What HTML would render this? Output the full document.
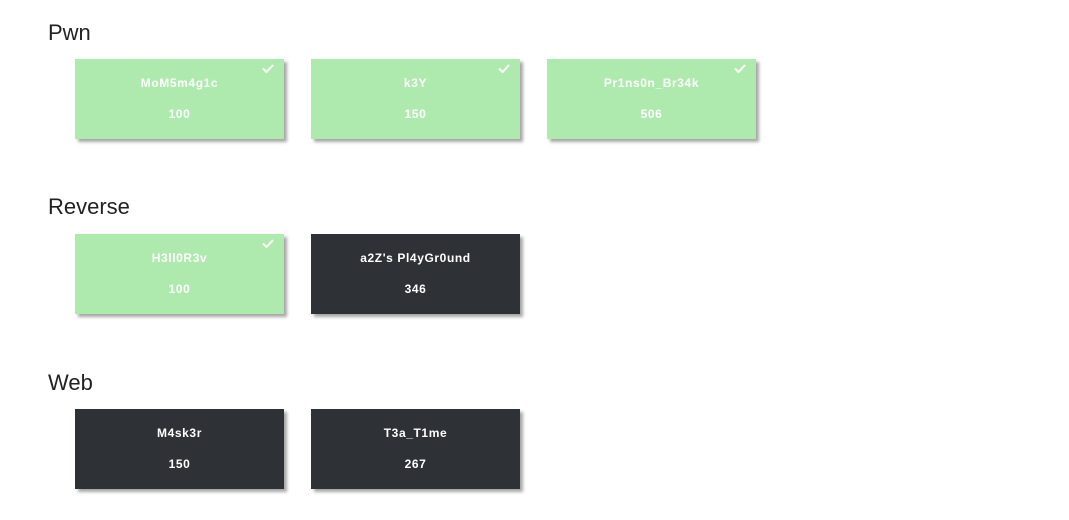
<!DOCTYPE html>
<html><head><style>
body{margin:0;background:#fff;font-family:"Liberation Sans",sans-serif;width:1069px;height:520px;overflow:hidden;position:relative}
h2{position:absolute;left:48px;margin:0;font-weight:normal;font-size:22px;color:#222;line-height:1}
.c{position:absolute;width:209px;height:80px;box-shadow:3px 3px 3px rgba(0,0,0,.35);color:#fff;font-weight:bold;font-size:12px;letter-spacing:.6px;text-align:center}
.g{background:#aeeaae}.d{background:#2e3236}
.t{position:absolute;top:17px;left:0;right:0}
.s{position:absolute;top:48px;left:0;right:0}
.k{position:absolute;right:10px;top:5px;width:12px;height:9px}
</style></head><body>
<h2 style="top:22px">Pwn</h2>
<div class="c g" style="left:75px;top:59px"><svg class="k" viewBox="0 0 12 9"><path d="M1 4.5L4.5 8L11 1" stroke="#fff" stroke-width="2" fill="none"/></svg><div class="t">MoM5m4g1c</div><div class="s">100</div></div>
<div class="c g" style="left:311px;top:59px"><svg class="k" viewBox="0 0 12 9"><path d="M1 4.5L4.5 8L11 1" stroke="#fff" stroke-width="2" fill="none"/></svg><div class="t">k3Y</div><div class="s">150</div></div>
<div class="c g" style="left:547px;top:59px"><svg class="k" viewBox="0 0 12 9"><path d="M1 4.5L4.5 8L11 1" stroke="#fff" stroke-width="2" fill="none"/></svg><div class="t">Pr1ns0n_Br34k</div><div class="s">506</div></div>
<h2 style="top:196px">Reverse</h2>
<div class="c g" style="left:75px;top:234px"><svg class="k" viewBox="0 0 12 9"><path d="M1 4.5L4.5 8L11 1" stroke="#fff" stroke-width="2" fill="none"/></svg><div class="t">H3ll0R3v</div><div class="s">100</div></div>
<div class="c d" style="left:311px;top:234px"><div class="t">a2Z's Pl4yGr0und</div><div class="s">346</div></div>
<h2 style="top:372px">Web</h2>
<div class="c d" style="left:75px;top:409px"><div class="t">M4sk3r</div><div class="s">150</div></div>
<div class="c d" style="left:311px;top:409px"><div class="t">T3a_T1me</div><div class="s">267</div></div>
</body></html>
